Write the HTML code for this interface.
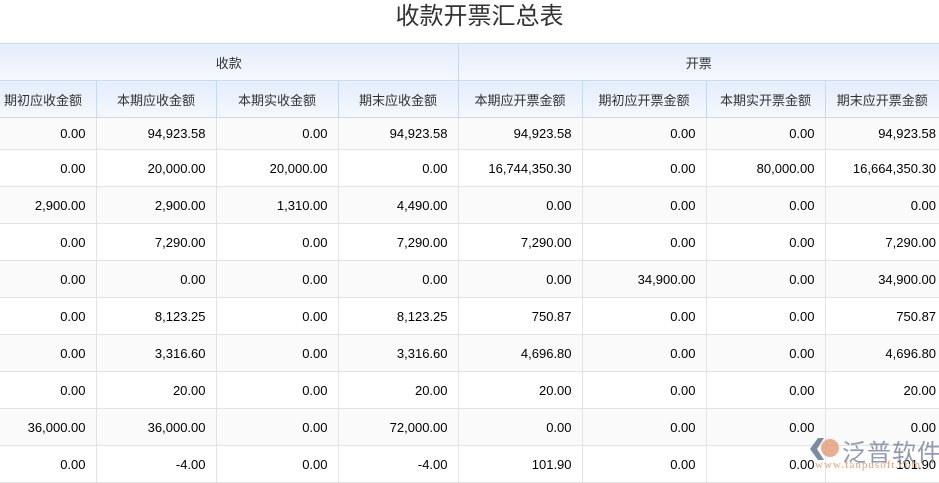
<!DOCTYPE html>
<html><head><meta charset="utf-8"><style>
body{margin:0;width:939px;height:479px;overflow:hidden;background:#fff;font-family:"Liberation Sans","Noto Sans CJK SC",sans-serif;position:relative}
.t{position:absolute;top:0;left:0;width:939px;text-align:center;font-size:24px;color:#333;line-height:34px;padding-left:20px;box-sizing:border-box}
table{position:absolute;top:43px;left:0;border-collapse:collapse;table-layout:fixed;width:939px}
th{background:linear-gradient(#e4edfb,#f5f8fe);color:#333;font-weight:normal;font-size:13px;border:1px solid #c6d9ee;height:36px;padding:0}
td{font-size:13px;color:#000;text-align:right;padding:0 10px 0 0;border:1px solid #e3e3e3;height:36px}
td:first-child,th:first-child{border-left:none}
td:last-child,th:last-child{border-right:none}
tr.a td{background:#fafafa}
tr.f td{height:31px}
.wm{position:absolute;left:842px;top:433px;color:#7d8aa3;font-size:24px;opacity:.85;letter-spacing:1px;white-space:nowrap}
.wm2{position:absolute;left:815px;top:459px;color:#e2a07e;font-size:11px;font-family:"Liberation Serif",serif;letter-spacing:1px;white-space:nowrap}
</style></head><body>
<div class="t">收款开票汇总表</div>
<table>
<colgroup><col style="width:96px"><col style="width:120px"><col style="width:122px"><col style="width:120px"><col style="width:124px"><col style="width:124px"><col style="width:119px"><col style="width:114px"></colgroup>
<tr><th colspan="4">收款</th><th colspan="4">开票</th></tr>
<tr><th style="text-align:left;padding-left:4px">期初应收金额</th><th>本期应收金额</th><th>本期实收金额</th><th>期末应收金额</th><th>本期应开票金额</th><th>期初应开票金额</th><th>本期实开票金额</th><th>期末应开票金额</th></tr>
<tr class="a f"><td>0.00</td><td>94,923.58</td><td>0.00</td><td>94,923.58</td><td>94,923.58</td><td>0.00</td><td>0.00</td><td style="padding-right:3px">94,923.58</td></tr>
<tr><td>0.00</td><td>20,000.00</td><td>20,000.00</td><td>0.00</td><td>16,744,350.30</td><td>0.00</td><td>80,000.00</td><td style="padding-right:3px">16,664,350.30</td></tr>
<tr class="a"><td>2,900.00</td><td>2,900.00</td><td>1,310.00</td><td>4,490.00</td><td>0.00</td><td>0.00</td><td>0.00</td><td style="padding-right:3px">0.00</td></tr>
<tr><td>0.00</td><td>7,290.00</td><td>0.00</td><td>7,290.00</td><td>7,290.00</td><td>0.00</td><td>0.00</td><td style="padding-right:3px">7,290.00</td></tr>
<tr class="a"><td>0.00</td><td>0.00</td><td>0.00</td><td>0.00</td><td>0.00</td><td>34,900.00</td><td>0.00</td><td style="padding-right:3px">34,900.00</td></tr>
<tr><td>0.00</td><td>8,123.25</td><td>0.00</td><td>8,123.25</td><td>750.87</td><td>0.00</td><td>0.00</td><td style="padding-right:3px">750.87</td></tr>
<tr class="a"><td>0.00</td><td>3,316.60</td><td>0.00</td><td>3,316.60</td><td>4,696.80</td><td>0.00</td><td>0.00</td><td style="padding-right:3px">4,696.80</td></tr>
<tr><td>0.00</td><td>20.00</td><td>0.00</td><td>20.00</td><td>20.00</td><td>0.00</td><td>0.00</td><td style="padding-right:3px">20.00</td></tr>
<tr class="a"><td>36,000.00</td><td>36,000.00</td><td>0.00</td><td>72,000.00</td><td>0.00</td><td>0.00</td><td>0.00</td><td style="padding-right:3px">0.00</td></tr>
<tr><td>0.00</td><td>-4.00</td><td>0.00</td><td>-4.00</td><td>101.90</td><td>0.00</td><td>0.00</td><td style="padding-right:3px">101.90</td></tr>
</table>
<svg style="position:absolute;left:808px;top:436px" width="36" height="26"><path d="M10 2 L2 13 L10 24 L16 24 L9 13 L16 2Z" fill="#7d8aa3"/><circle cx="22" cy="12" r="9" fill="#e4a07e" opacity=".85"/></svg>
<div class="wm">泛普软件</div>
<div class="wm2">www.fanpusoft.com</div>
</body></html>
